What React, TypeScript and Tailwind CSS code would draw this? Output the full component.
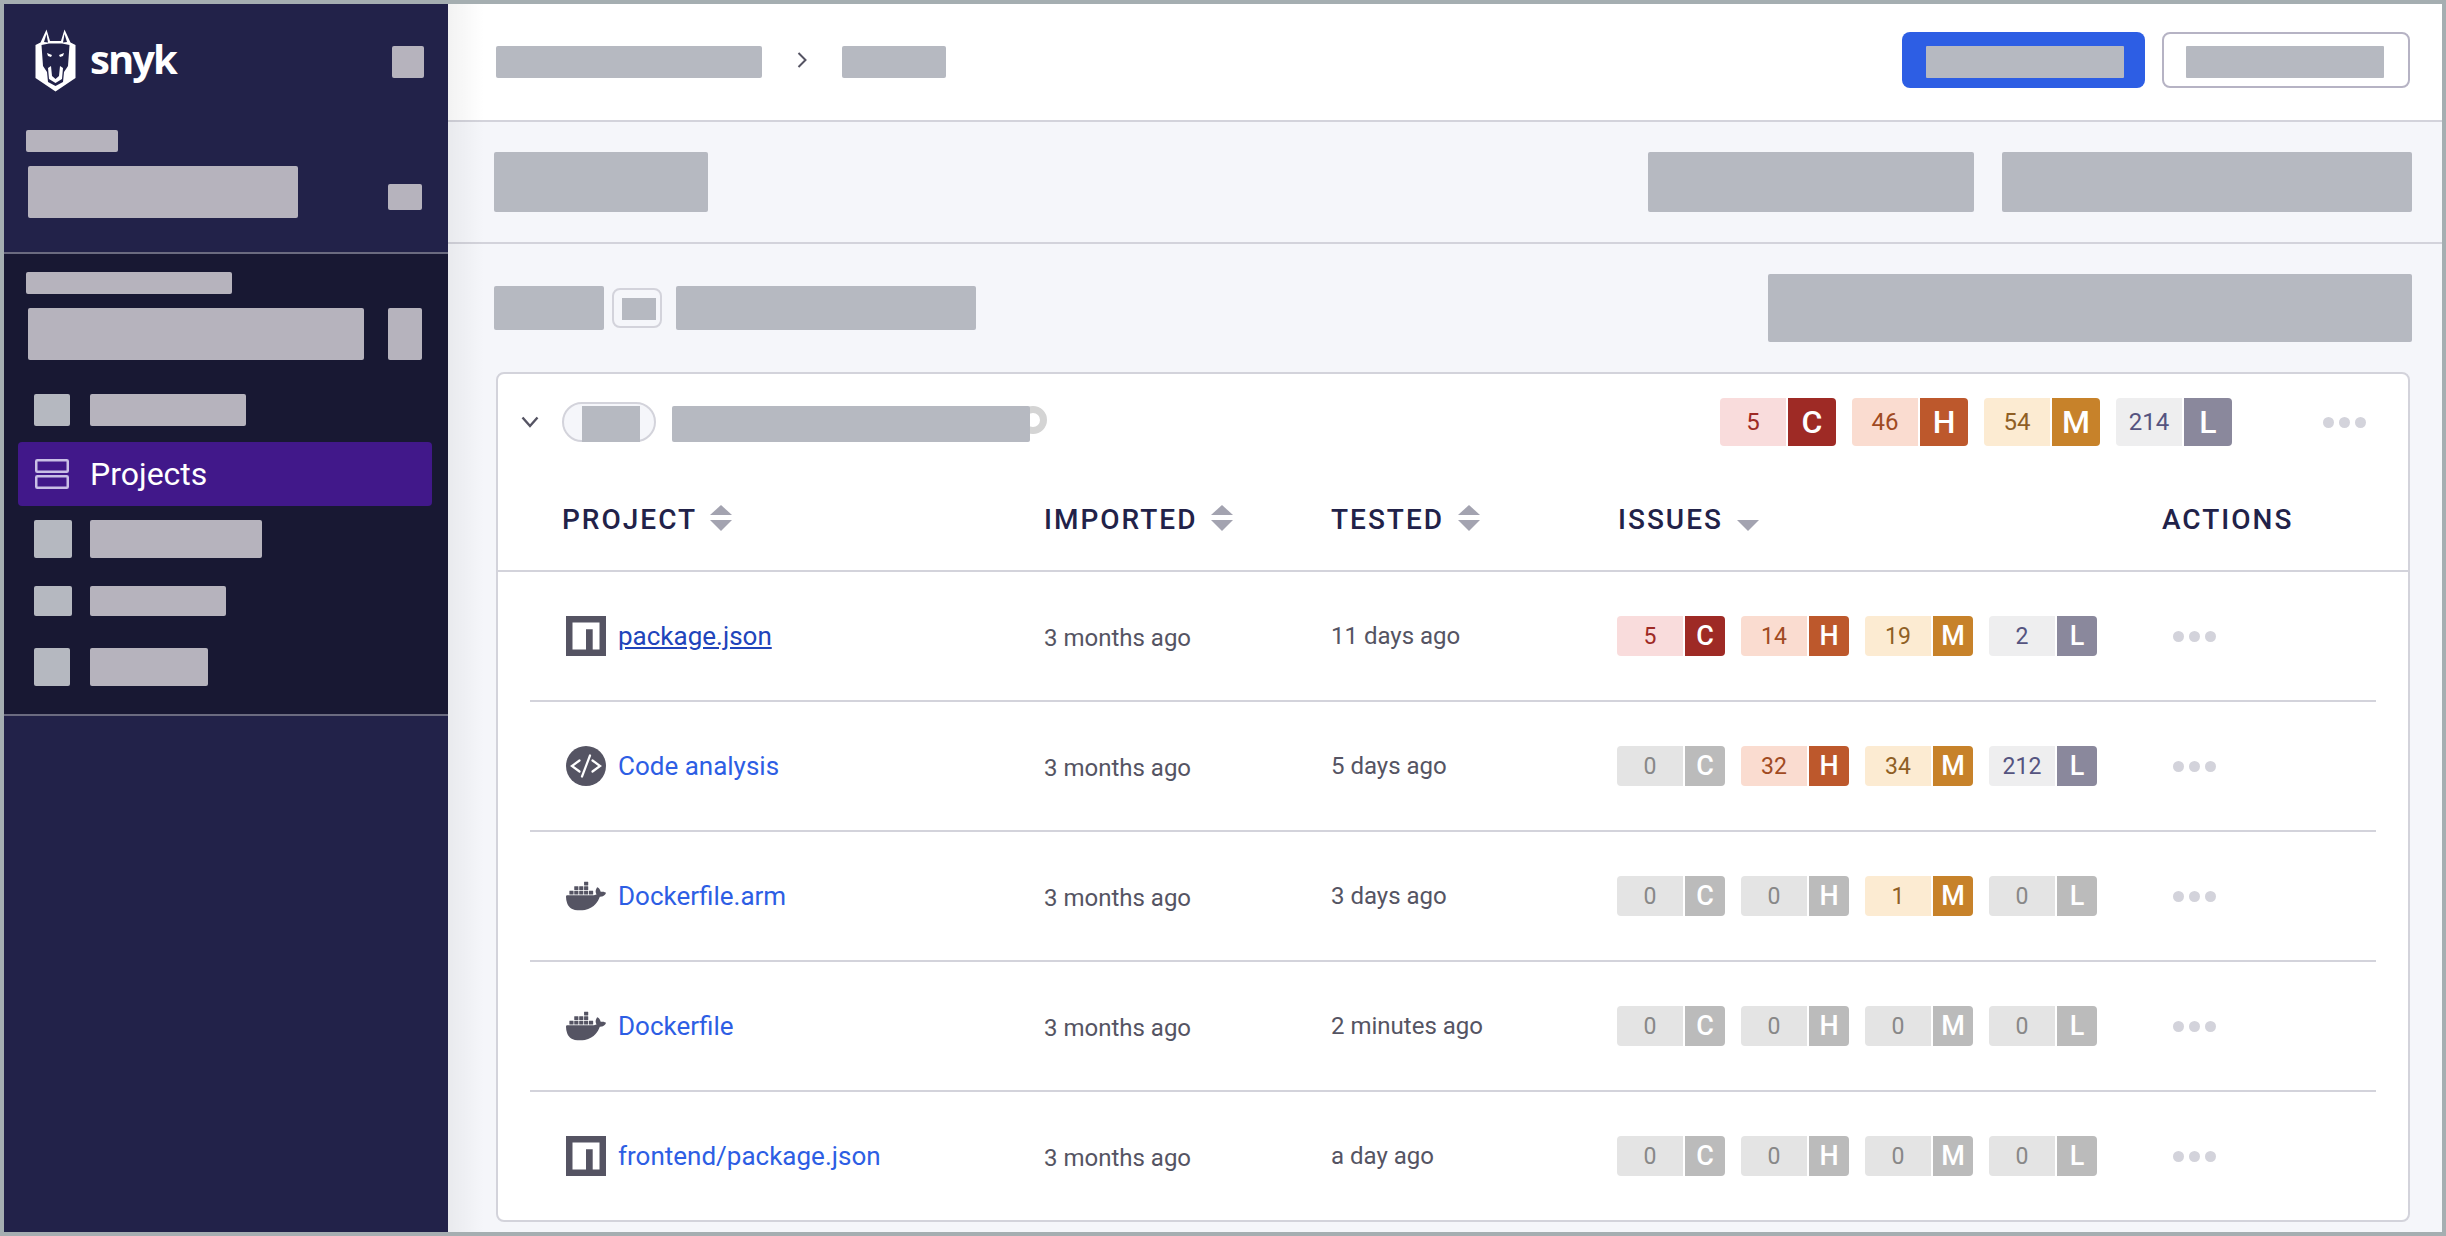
import { SiDocker } from "react-icons/si";

type Sev = "C" | "H" | "M" | "L";

const sevStyles: Record<Sev, { num: string; letter: string }> = {
  C: { num: "bg-[#f9dcdc] text-[#9e2a25]", letter: "bg-[#9e2a25]" },
  H: { num: "bg-[#fadcd0] text-[#a04a22]", letter: "bg-[#bd582c]" },
  M: { num: "bg-[#fcebd2] text-[#8f5f25]", letter: "bg-[#c7822a]" },
  L: { num: "bg-[#eeeeef] text-[#555480]", letter: "bg-[#8a889c]" },
};

const sevOrder: Sev[] = ["C", "H", "M", "L"];

const rows = [
  { name: "package.json", icon: "npm", imported: "3 months ago", tested: "11 days ago", counts: [5, 14, 19, 2], active: true },
  { name: "Code analysis", icon: "code", imported: "3 months ago", tested: "5 days ago", counts: [0, 32, 34, 212] },
  { name: "Dockerfile.arm", icon: "docker", imported: "3 months ago", tested: "3 days ago", counts: [0, 0, 1, 0] },
  { name: "Dockerfile", icon: "docker", imported: "3 months ago", tested: "2 minutes ago", counts: [0, 0, 0, 0] },
  { name: "frontend/package.json", icon: "npm", imported: "3 months ago", tested: "a day ago", counts: [0, 0, 0, 0] },
];

function Badge({ sev, count, large }: { sev: Sev; count: number; large?: boolean }) {
  const off = count === 0;
  const num = off ? "bg-[#e4e4e4] text-[#888888]" : sevStyles[sev].num;
  const letter = off ? "bg-[#bbbbbb]" : sevStyles[sev].letter;
  return (
    <div className={`flex gap-[2px] leading-none ${large ? "h-[48px] text-[24px]" : "h-[40px] text-[23px]"}`}>
      <div className={`w-[66px] flex items-center justify-center rounded-l-[4px] ${num}`}>{count}</div>
      <div
        className={`flex items-center justify-center rounded-r-[4px] text-white font-medium ${letter} ${
          large ? "w-[48px] text-[32px]" : "w-[40px] text-[27px]"
        }`}
      >
        {sev}
      </div>
    </div>
  );
}

function Dots() {
  return (
    <div className="flex gap-[5px]">
      <div className="w-[11px] h-[11px] rounded-full bg-[#d3d3db]"></div>
      <div className="w-[11px] h-[11px] rounded-full bg-[#d3d3db]"></div>
      <div className="w-[11px] h-[11px] rounded-full bg-[#d3d3db]"></div>
    </div>
  );
}

function SortIcon() {
  return (
    <svg width="22" height="26" viewBox="0 0 22 26" className="-mt-[4px]">
      <path d="M11 0 22 10H0Z" fill="#a3a3b0" />
      <path d="M0 15H22L11 26Z" fill="#a3a3b0" />
    </svg>
  );
}

function ProjectIcon({ type }: { type: string }) {
  if (type === "npm") {
    return (
      <svg width="40" height="40" viewBox="0 0 40 40" className="shrink-0">
        <rect width="40" height="40" fill="#555463" />
        <path d="M6.5 6.5H33.5V33.5H26.7V13.3H20V33.5H6.5Z" fill="#ffffff" />
      </svg>
    );
  }
  if (type === "code") {
    return (
      <svg width="40" height="40" viewBox="0 0 40 40" className="shrink-0">
        <circle cx="20" cy="20" r="20" fill="#555463" />
        <path
          d="M13.5 14.5 5.9 20l7.6 5.5M26.5 14.5l7.6 5.5-7.6 5.5M24 9.5 16 30.5"
          fill="none"
          stroke="#ffffff"
          strokeWidth="2.2"
          strokeLinecap="round"
        />
      </svg>
    );
  }
  return <SiDocker className="w-[40px] h-[40px] shrink-0 text-[#555463]" />;
}

function SnykDog() {
  return (
    <svg width="41" height="63" viewBox="0 0 41 63" className="shrink-0">
      <path
        d="M0.5 16 5.5 13.5 11.5 0.5 15 12 26 12 29.5 0.5 35.5 13.5 40.5 16 40.5 49 20.5 62.5 0.5 49Z"
        fill="#ffffff"
      />
      <path d="M11.5 5 9 13 13 13.5Z" fill="#222249" />
      <path d="M29.5 5 32 13 28 13.5Z" fill="#222249" />
      <path
        d="M6.5 16 14 14.5 27 14.5 34.5 16 33 37 29 43 28 53 20.5 57 13 53 12 43 8 37Z"
        fill="#222249"
      />
      <path d="M12 24 17 26 16 28 13 27Z M29 24 24 26 25 28 28 27Z" fill="#ffffff" />
      <path
        d="M13 39 16 37 17 47 20.5 50 24 47 25 37 28 39 27 50 20.5 54 14 50Z"
        fill="#ffffff"
      />
      <path d="M19 34H22V46L20.5 47 19 46Z" fill="#222249" />
    </svg>
  );
}

function ProjectRow({ row, last }: { row: (typeof rows)[number]; last: boolean }) {
  return (
    <div
      className={`mx-[32px] pl-[36px] grid grid-cols-[478px_287px_286px_545px_1fr] items-center border-[#d3d3db] ${
        last ? "h-[128px]" : "h-[130px] border-b-2"
      }`}
    >
      <div className="flex items-center gap-[12px]">
        <ProjectIcon type={row.icon} />
        <span
          className={`text-[26px] leading-none ${row.active ? "text-[#2044bb] underline" : "text-[#2d5ee4]"}`}
        >
          {row.name}
        </span>
      </div>
      <div className="mt-[4px] text-[24px] leading-none text-[#555463]">{row.imported}</div>
      <div className="text-[24px] leading-none text-[#555463]">{row.tested}</div>
      <div className="flex gap-[16px]">
        {sevOrder.map((s, i) => (
          <Badge key={s} sev={s} count={row.counts[i]} />
        ))}
      </div>
      <div className="pl-[11px]">
        <Dots />
      </div>
    </div>
  );
}

export default function App() {
  return (
    <div className="w-[2446px] h-[1236px] overflow-hidden border-4 border-[#a5aeb1] flex font-[Roboto,sans-serif] bg-[#f5f6fa]">
      {/* Sidebar */}
      <aside className="w-[444px] shrink-0 flex flex-col bg-[#222249]">
        <div className="h-[250px] border-b-2 border-[#6b6b80]">
          <div className="flex items-start justify-between pt-[25px] pl-[31px] pr-[24px]">
            <div className="flex">
              <SnykDog />
              <span className="ml-[14px] mt-[2px] font-['Open_Sans',sans-serif] font-bold text-[40px] leading-[56px] tracking-[-2px] text-white">
                snyk
              </span>
            </div>
            <div className="w-[32px] h-[32px] mt-[17px] rounded-[2px] bg-[#b6b3bd]"></div>
          </div>
          <div className="w-[92px] h-[22px] ml-[22px] mt-[38px] rounded-[2px] bg-[#b6b3bd]"></div>
          <div className="flex justify-between ml-[24px] mr-[26px] mt-[14px]">
            <div className="w-[270px] h-[52px] rounded-[2px] bg-[#b6b3bd]"></div>
            <div className="w-[34px] h-[26px] mt-[18px] rounded-[2px] bg-[#b6b3bd]"></div>
          </div>
        </div>

        <div className="h-[462px] pt-[18px] bg-[#181833] border-b-2 border-[#6b6b80]">
          <div className="w-[206px] h-[22px] ml-[22px] rounded-[2px] bg-[#b6b3bd]"></div>
          <div className="flex gap-[24px] ml-[24px] mt-[14px]">
            <div className="w-[336px] h-[52px] rounded-[2px] bg-[#b6b3bd]"></div>
            <div className="w-[34px] h-[52px] rounded-[2px] bg-[#b6b3bd]"></div>
          </div>

          <div className="flex gap-[20px] ml-[30px] mt-[34px]">
            <div className="w-[36px] h-[32px] rounded-[2px] bg-[#b5b8c0]"></div>
            <div className="w-[156px] h-[32px] rounded-[2px] bg-[#b6b3bd]"></div>
          </div>

          <div className="flex items-center h-[64px] w-[414px] ml-[14px] mt-[16px] pl-[17px] rounded-[4px] bg-[#41188a]">
            <svg width="34" height="30" viewBox="0 0 34 30" className="shrink-0">
              <rect x="1.25" y="1.25" width="31.5" height="11.5" rx="1" fill="none" stroke="#c9bfe6" strokeWidth="2.5" />
              <rect x="1.25" y="17.25" width="31.5" height="11.5" rx="1" fill="none" stroke="#c9bfe6" strokeWidth="2.5" />
            </svg>
            <span className="ml-[21px] text-[32px] leading-none text-white">Projects</span>
          </div>

          <div className="flex gap-[18px] ml-[30px] mt-[14px]">
            <div className="w-[38px] h-[38px] rounded-[2px] bg-[#b5b8c0]"></div>
            <div className="w-[172px] h-[38px] rounded-[2px] bg-[#b6b3bd]"></div>
          </div>
          <div className="flex gap-[18px] ml-[30px] mt-[28px]">
            <div className="w-[38px] h-[30px] rounded-[2px] bg-[#b5b8c0]"></div>
            <div className="w-[136px] h-[30px] rounded-[2px] bg-[#b6b3bd]"></div>
          </div>
          <div className="flex gap-[20px] ml-[30px] mt-[32px]">
            <div className="w-[36px] h-[38px] rounded-[2px] bg-[#b5b8c0]"></div>
            <div className="w-[118px] h-[38px] rounded-[2px] bg-[#b6b3bd]"></div>
          </div>
        </div>
      </aside>

      {/* Main */}
      <main className="relative flex-1 flex flex-col">
        <div className="absolute left-0 top-0 bottom-0 w-[36px] bg-gradient-to-r from-black/5 to-transparent pointer-events-none"></div>

        {/* Breadcrumb bar */}
        <div className="h-[118px] shrink-0 flex items-center bg-white border-b-2 border-[#d3d3db] pl-[48px] pr-[32px]">
          <div className="w-[266px] h-[32px] rounded-[2px] bg-[#b6b9c1]"></div>
          <svg width="10" height="16" viewBox="0 0 10 16" className="mx-[35px] -mt-[4px]">
            <path d="M1.5 1 8.5 8 1.5 15" fill="none" stroke="#555463" strokeWidth="2" />
          </svg>
          <div className="w-[104px] h-[32px] rounded-[2px] bg-[#b6b9c1]"></div>
          <div className="ml-auto flex gap-[17px] -mt-[4px]">
            <div className="w-[243px] h-[56px] pl-[24px] pt-[14px] rounded-[8px] bg-[#2d5ee4]">
              <div className="w-[198px] h-[32px] rounded-[1px] bg-[#b6b9c1]"></div>
            </div>
            <div className="w-[248px] h-[56px] pl-[22px] pt-[12px] rounded-[8px] border-2 border-[#b6b3c4] bg-white">
              <div className="w-[198px] h-[32px] rounded-[1px] bg-[#b6b9c1]"></div>
            </div>
          </div>
        </div>

        {/* Title bar */}
        <div className="h-[122px] shrink-0 flex items-center justify-between border-b-2 border-[#d3d3db] pl-[46px] pr-[30px]">
          <div className="w-[214px] h-[60px] rounded-[2px] bg-[#b6b9c1]"></div>
          <div className="flex gap-[28px]">
            <div className="w-[326px] h-[60px] rounded-[2px] bg-[#b6b9c1]"></div>
            <div className="w-[410px] h-[60px] rounded-[2px] bg-[#b6b9c1]"></div>
          </div>
        </div>

        {/* Filters */}
        <div className="flex items-center justify-between pt-[30px] pl-[46px] pr-[30px]">
          <div className="flex items-center">
            <div className="w-[110px] h-[44px] rounded-[2px] bg-[#b6b9c1]"></div>
            <div className="w-[50px] h-[40px] ml-[8px] pl-[8px] pt-[2px] flex items-center rounded-[8px] border-2 border-[#d3d3db]">
              <div className="w-[34px] h-[22px] bg-[#b6b9c1]"></div>
            </div>
            <div className="w-[300px] h-[44px] ml-[14px] rounded-[2px] bg-[#b6b9c1]"></div>
          </div>
          <div className="w-[644px] h-[68px] rounded-[2px] bg-[#b6b9c1]"></div>
        </div>

        {/* Project group card */}
        <div className="ml-[48px] mr-[32px] mt-[30px] h-[850px] rounded-[8px] border-2 border-[#d3d3db] bg-white">
          <div className="h-[96px] flex items-center pl-[23px] pr-[42px]">
            <svg width="18" height="12" viewBox="0 0 18 12" className="shrink-0">
              <path d="M1.5 1.5 9 10 16.5 1.5" fill="none" stroke="#555463" strokeWidth="2.4" />
            </svg>
            <div className="w-[94px] h-[40px] ml-[23px] pl-[18px] flex items-end rounded-full border-2 border-[#d3d3db] bg-[#f5f6fa]">
              <div className="w-[58px] h-[36px] -mb-[2px] bg-[#b6b9c1]"></div>
            </div>
            <div className="relative w-[358px] h-[36px] ml-[16px] mt-[4px]">
              <div className="absolute -right-[17px] top-0 w-[28px] h-[28px] rounded-full border-[7px] border-[#d4d4d4]"></div>
              <div className="absolute inset-0 rounded-[2px] bg-[#b6b9c1]"></div>
            </div>
            <div className="ml-auto flex gap-[16px]">
              <Badge sev="C" count={5} large />
              <Badge sev="H" count={46} large />
              <Badge sev="M" count={54} large />
              <Badge sev="L" count={214} large />
            </div>
            <div className="ml-[91px]">
              <Dots />
            </div>
          </div>

          <div className="h-[102px] pl-[64px] grid grid-cols-[482px_287px_287px_544px_1fr] items-center border-b-2 border-[#d3d3db] text-[28px] leading-none font-medium tracking-[2px] text-[#222249]">
            <div className="flex items-center gap-[13px]">
              PROJECT
              <SortIcon />
            </div>
            <div className="flex items-center gap-[14px]">
              IMPORTED
              <SortIcon />
            </div>
            <div className="flex items-center gap-[14px]">
              TESTED
              <SortIcon />
            </div>
            <div className="flex items-center gap-[14px]">
              ISSUES
              <svg width="22" height="11" viewBox="0 0 22 11" className="mt-[10px]">
                <path d="M0 0H22L11 11Z" fill="#a3a3b0" />
              </svg>
            </div>
            <div>ACTIONS</div>
          </div>

          {rows.map((row, i) => (
            <ProjectRow key={row.name} row={row} last={i === rows.length - 1} />
          ))}
        </div>
      </main>
    </div>
  );
}
